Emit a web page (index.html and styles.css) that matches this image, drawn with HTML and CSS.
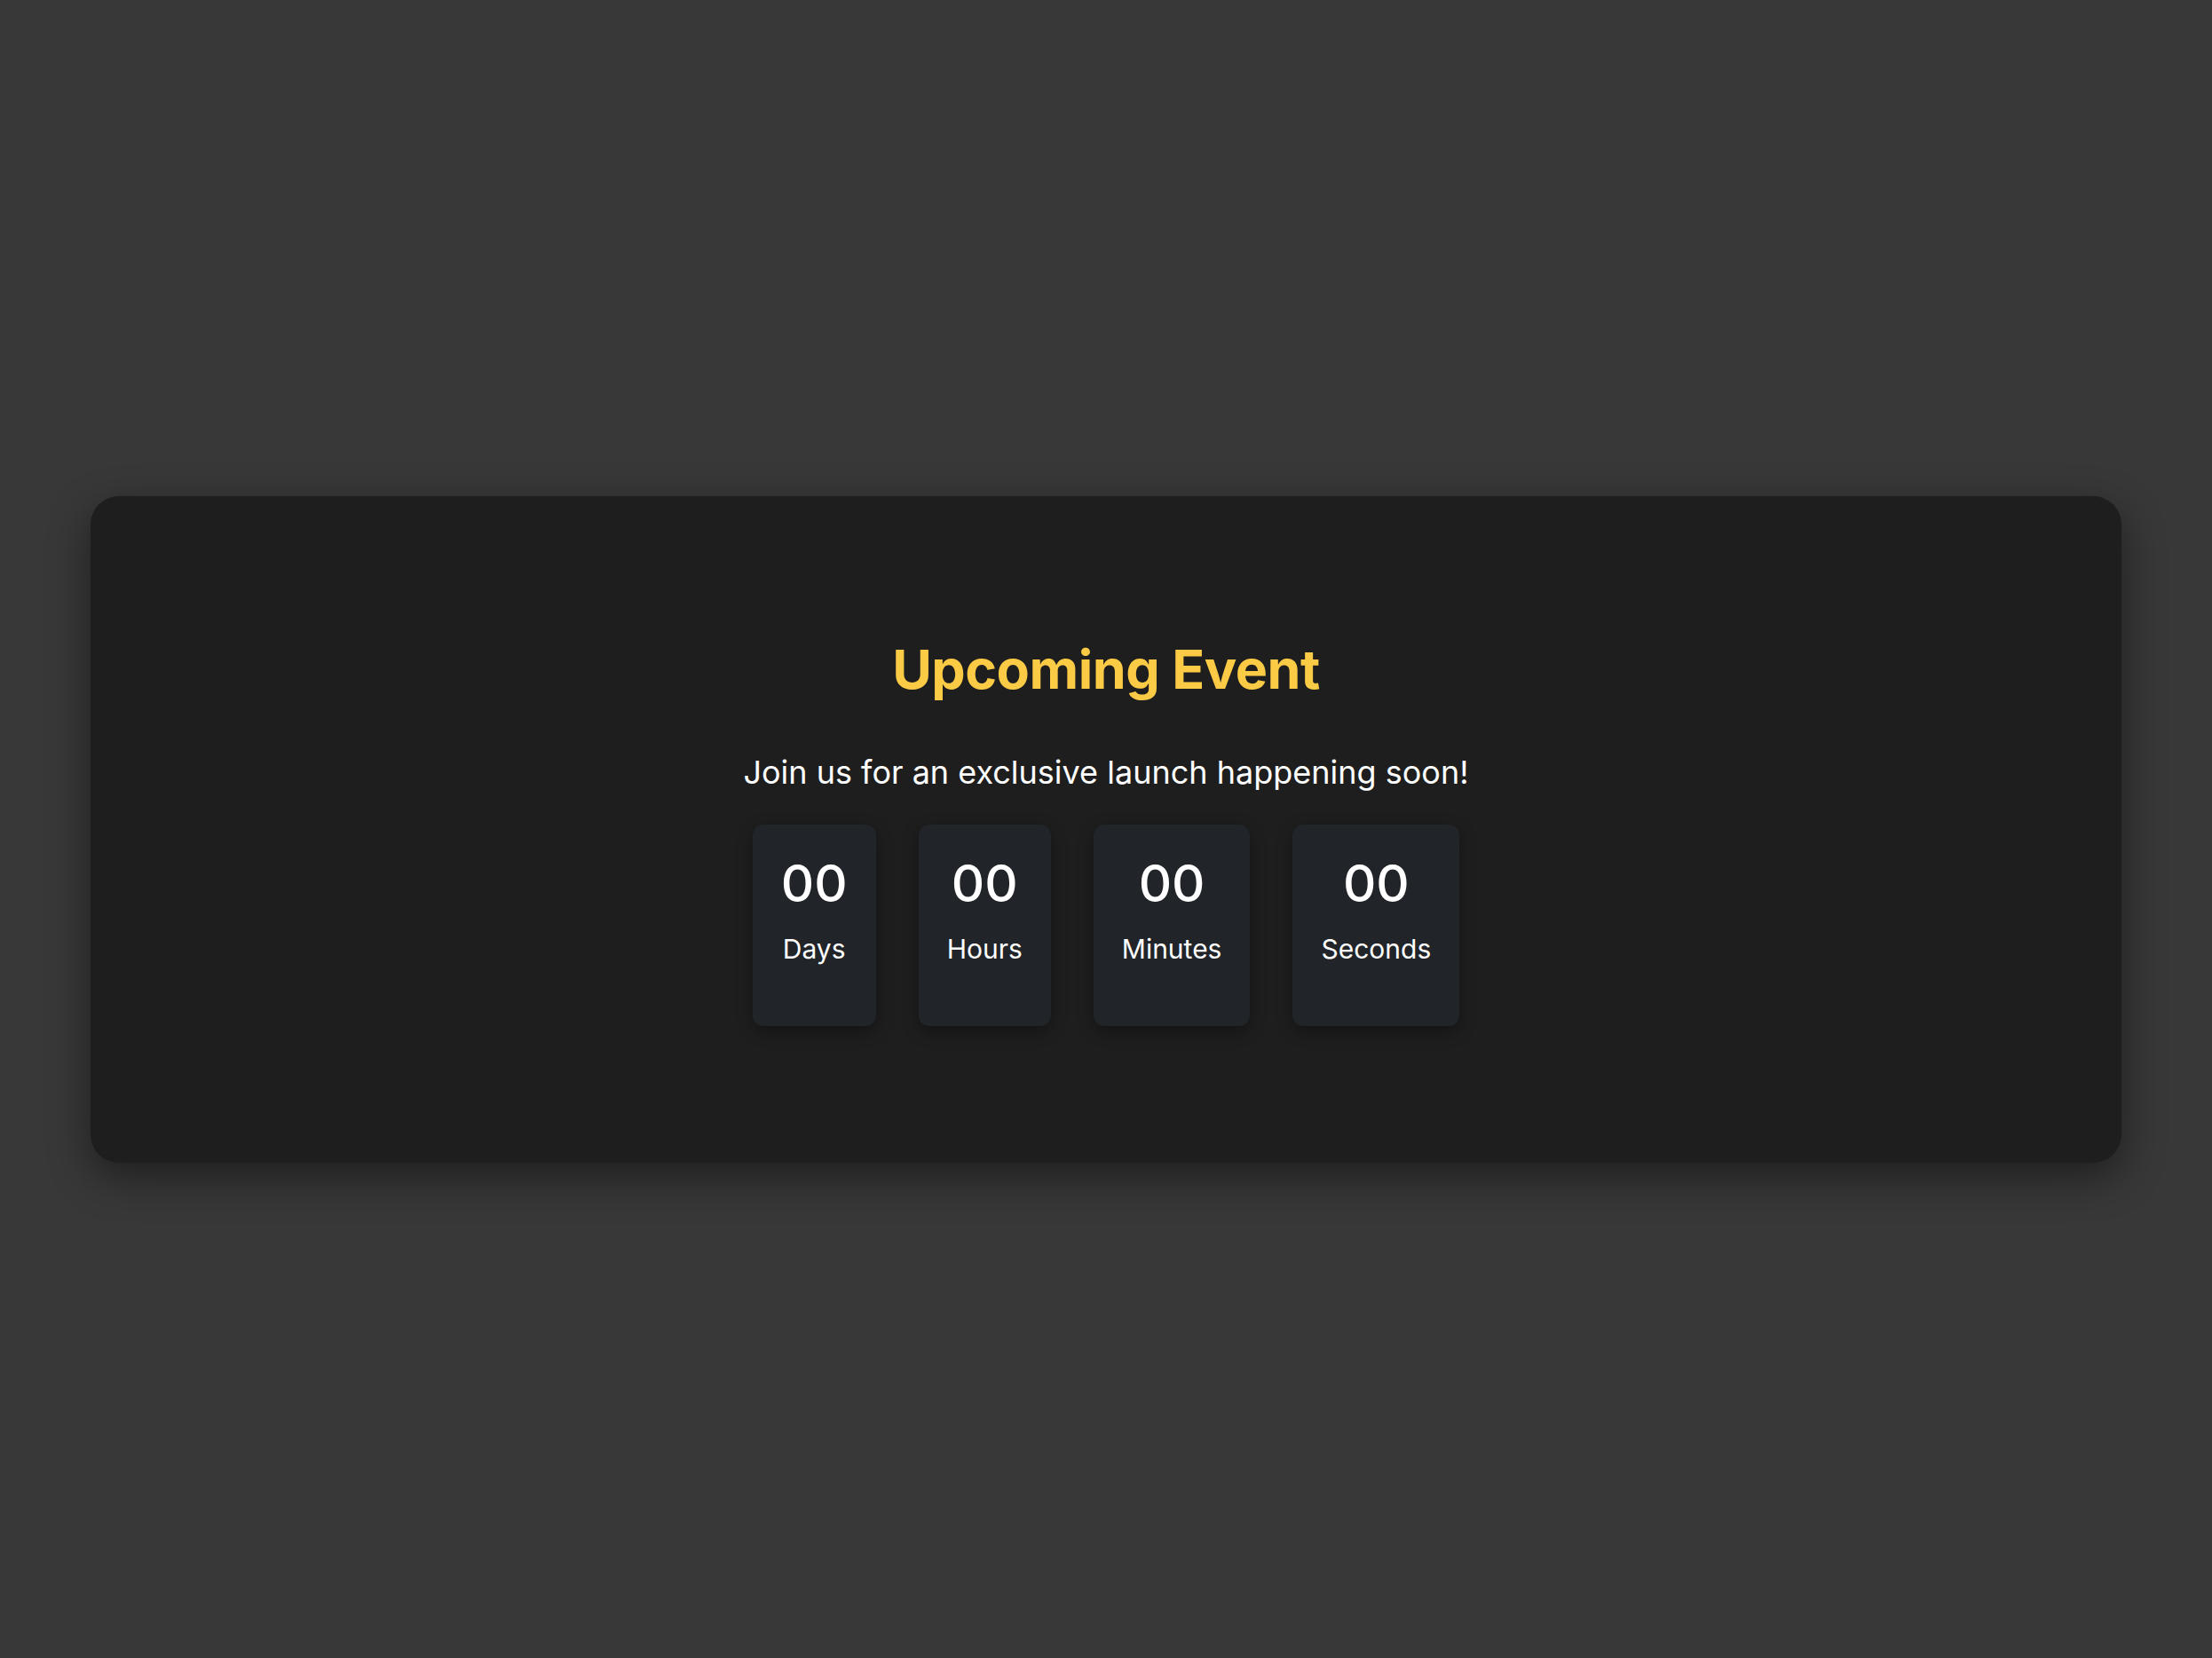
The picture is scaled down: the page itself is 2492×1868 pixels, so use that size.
FILE: index.html
```html
<!DOCTYPE html>
<html lang="en">
<head>
<meta charset="utf-8">
<title>Upcoming Event</title>
<link rel="stylesheet" href="styles.css">
</head>
<body>
<main class="page">
  <section class="card">
    <h1 class="title">Upcoming Event</h1>
    <p class="subtitle">Join us for an exclusive launch happening soon!</p>
    <div class="countdown">
      <div class="unit"><span class="num">00</span><span class="label">Days</span></div>
      <div class="unit"><span class="num">00</span><span class="label">Hours</span></div>
      <div class="unit"><span class="num">00</span><span class="label">Minutes</span></div>
      <div class="unit"><span class="num">00</span><span class="label">Seconds</span></div>
    </div>
  </section>
</main>
</body>
</html>
```

FILE: styles.css
```css
html, body {
  margin: 0;
  padding: 0;
  height: 100%;
}
body {
  background: #383838;
  font-family: Inter, "Noto Sans", "Liberation Sans", sans-serif;
  color: #ffffff;
}
.page {
  min-height: 100vh;
  box-sizing: border-box;
  display: flex;
  align-items: center;
  justify-content: center;
  padding: 0 102px;
}
.card {
  flex: 1;
  background: #1e1e1e;
  border-radius: 32px;
  box-shadow: 0 16px 48px rgba(0, 0, 0, 0.45);
  padding: 157px 40px 154px;
  display: flex;
  flex-direction: column;
  align-items: center;
  text-align: center;
}
.title {
  margin: 0 0 55px;
  font-size: 61px;
  line-height: 77px;
  font-weight: 700;
  color: #fbcb45;
  letter-spacing: -0.5px;
}
.subtitle {
  margin: 0 0 37px;
  font-size: 36px;
  line-height: 44px;
  font-weight: 400;
  color: #ffffff;
}
.countdown {
  display: flex;
  gap: 48px;
}
.unit {
  background: #212428;
  border-radius: 12px;
  box-shadow: 0 6px 18px rgba(0, 0, 0, 0.35);
  padding: 31px 32px 69px;
  display: flex;
  flex-direction: column;
  align-items: center;
}
.num {
  font-size: 58px;
  line-height: 70px;
  font-weight: 500;
  margin-bottom: 21px;
}
.label {
  font-size: 30px;
  line-height: 36px;
  font-weight: 400;
}
```
